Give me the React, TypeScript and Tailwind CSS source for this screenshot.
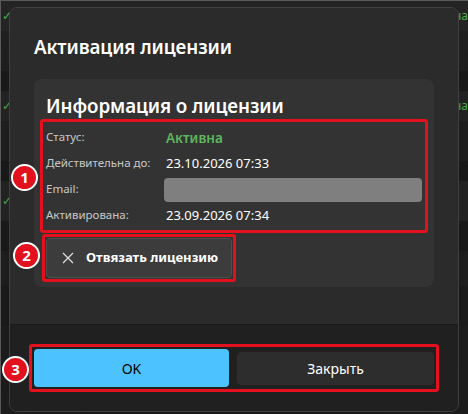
import React from "react";

const font = { fontFamily: '"Noto Sans", "Open Sans", sans-serif' };

const Badge: React.FC<{ n: number; className: string }> = ({ n, className }) => (
  <span
    className={`absolute flex h-[27px] w-[27px] items-center justify-center rounded-full border-2 border-white bg-[#e3101e] text-[15px] font-bold leading-none text-white ${className}`}
  >
    {n}
  </span>
);

const Mark: React.FC<{ className: string }> = ({ className }) => (
  <span className={`pointer-events-none absolute rounded-[3px] border-[3px] border-[#e3101e] ${className}`} />
);

const Row: React.FC<{ label: string; children: React.ReactNode }> = ({ label, children }) => (
  <div className="grid h-[26px] grid-cols-[120px_1fr] items-center">
    <span className="-mt-[3px] text-[11.5px] text-[#c8c8c8]">{label}</span>
    {children}
  </div>
);

const BackgroundRows = () => {
  const rows = [
    { h: 30, bg: "bg-[#252525]", check: true },
    { h: 40, bg: "bg-[#202020]", check: false },
    { h: 20, bg: "bg-[#1a1a1a]", check: false },
    { h: 30, bg: "bg-[#252525]", check: true },
    { h: 40, bg: "bg-[#202020]", check: false },
    { h: 20, bg: "bg-[#1a1a1a]", check: false },
    { h: 40, bg: "bg-[#252525]", check: true },
    { h: 30, bg: "bg-[#1a1a1a]", check: false },
    { h: 35, bg: "bg-[#202020]", check: false },
    { h: 40, bg: "bg-[#1c1c1c]", check: false },
    { h: 89, bg: "bg-[#1e1e1e]", check: false },
  ];
  return (
    <div className="flex flex-col">
      {rows.map((r, i) => (
        <div key={i} className={`flex items-center justify-between ${r.bg}`} style={{ height: r.h }}>
          <span className="pl-[1px] text-[12px] text-[#4caf50]">{r.check ? "✓" : ""}</span>
          <span className="text-[12px] text-[#4caf50]">{r.check && i < 5 ? "на" : ""}</span>
        </div>
      ))}
    </div>
  );
};

export default function App() {
  return (
    <div className="relative h-[414px] w-[468px] overflow-hidden border-l border-t border-[#5a5a5a] bg-[#1e1e1e]" style={font}>
      <BackgroundRows />

      <div className="absolute left-[8px] top-[6px] flex h-[405px] w-[450px] flex-col overflow-hidden rounded-lg border border-[#404040] shadow-2xl">
        <div className="flex flex-1 flex-col bg-[#2b2b2b] px-6 pt-[25px]">
          <h1 className="text-[18.8px] font-semibold leading-[28px] tracking-[-0.1px] text-white">Активация лицензии</h1>

          <div className="mt-[18px] rounded-lg bg-[#333333] px-3 pb-[9px] pt-[13px]">
            <h2 className="text-[18.8px] font-semibold leading-[28px] tracking-[-0.1px] text-white">Информация о лицензии</h2>

            <div className="relative mt-[5px] flex flex-col">
              <Mark className="-bottom-[4px] -left-[6px] -right-[6px] -top-[6px]" />
              <Row label="Статус:">
                <span className="text-[13.5px] font-semibold text-[#5cb85c]">Активна</span>
              </Row>
              <Row label="Действительна до:">
                <span className="text-[13px] text-white">23.10.2026 07:33</span>
              </Row>
              <Row label="Email:">
                <span className="-ml-[2px] h-[24px] rounded bg-[#7f7f7f]" />
              </Row>
              <Row label="Активирована:">
                <span className="text-[13px] text-white">23.09.2026 07:34</span>
              </Row>
            </div>

            <div className="relative mt-[9px] w-[186px]">
              <Mark className="-bottom-[4px] -left-[4px] -right-[4px] -top-[4px]" />
              <button className="flex h-[40px] w-full items-center gap-3 rounded border border-[#4f4f4f] bg-[#3c3c3c] pl-[15px] text-[13px] font-bold text-white">
                <svg width="12" height="12" viewBox="0 0 12 12" fill="none" stroke="#e0e0e0" strokeWidth="1.2">
                  <path d="M1 1l10 10M11 1L1 11" />
                </svg>
                Отвязать лицензию
              </button>
            </div>
          </div>
        </div>

        <div className="flex h-[87px] items-start gap-2 border-t border-[#1a1a1a] bg-[#202020] px-6 pt-[24px]">
          <div className="relative flex w-full items-center gap-2">
            <Mark className="-bottom-[5px] -left-[5px] -right-[5px] -top-[5px]" />
            <button className="h-[38px] flex-1 rounded bg-[#4cc2ff] text-[14px] text-black">OK</button>
            <button className="h-[33px] flex-1 rounded border border-[#2e2e2e] bg-[#2d2d2d] text-[14px] text-white">Закрыть</button>
          </div>
        </div>
      </div>

      <Badge n={1} className="left-[10px] top-[163px]" />
      <Badge n={2} className="left-[12px] top-[241px]" />
      <Badge n={3} className="left-[1px] top-[355px]" />
    </div>
  );
}
